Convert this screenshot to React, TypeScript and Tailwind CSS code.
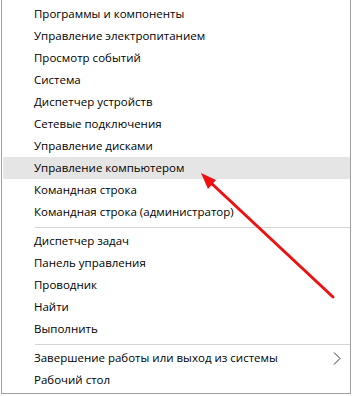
const groups: string[][] = [
  [
    "Программы и компоненты",
    "Управление электропитанием",
    "Просмотр событий",
    "Система",
    "Диспетчер устройств",
    "Сетевые подключения",
    "Управление дисками",
    "Управление компьютером",
    "Командная строка",
    "Командная строка (администратор)",
  ],
  ["Диспетчер задач", "Панель управления", "Проводник", "Найти", "Выполнить"],
  ["Завершение работы или выход из системы", "Рабочий стол"],
];

const HIGHLIGHT = "Управление компьютером";
const SUBMENU = "Завершение работы или выход из системы";

function MenuRow({ label }: { label: string }) {
  const active = label === HIGHLIGHT;
  return (
    <div
      className={
        "relative flex h-[22px] items-center pl-[31px] text-[11.5px] text-black " +
        (active ? "bg-[#e5e5e5]" : "")
      }
    >
      <span className="leading-none">{label}</span>
      {label === SUBMENU && (
        <svg className="absolute right-[9px] top-[5px]" width="8" height="13" viewBox="0 0 8 13">
          <polyline points="1,0.5 7,6.5 1,12.5" fill="none" stroke="#333" strokeWidth="1" />
        </svg>
      )}
    </div>
  );
}

export default function App() {
  return (
    <div
      className="relative h-[396px] w-[352px] overflow-hidden bg-white"
      style={{ fontFamily: '"Open Sans", "Noto Sans", sans-serif' }}
    >
      <div className="ml-[1px] w-[350px] border-b border-l border-r border-[#a0a0a0] pl-[1px] pt-[3px] pb-[2px]">
        {groups.map((items, gi) => (
          <div key={gi}>
            {gi > 0 && <div className="mb-[2px] ml-[32px] mt-[4px] h-px bg-[#d4d4d4]" />}
            {items.map((item) => (
              <MenuRow key={item} label={item} />
            ))}
          </div>
        ))}
      </div>

      {/* annotation arrow */}
      <svg className="pointer-events-none absolute left-0 top-0" width="352" height="396">
        <line x1="333" y1="297" x2="210" y2="182" stroke="#ee1111" strokeWidth="3" strokeLinecap="round" />
        <polygon points="201,173 216,180 208,189" fill="#ee1111" />
      </svg>
    </div>
  );
}
